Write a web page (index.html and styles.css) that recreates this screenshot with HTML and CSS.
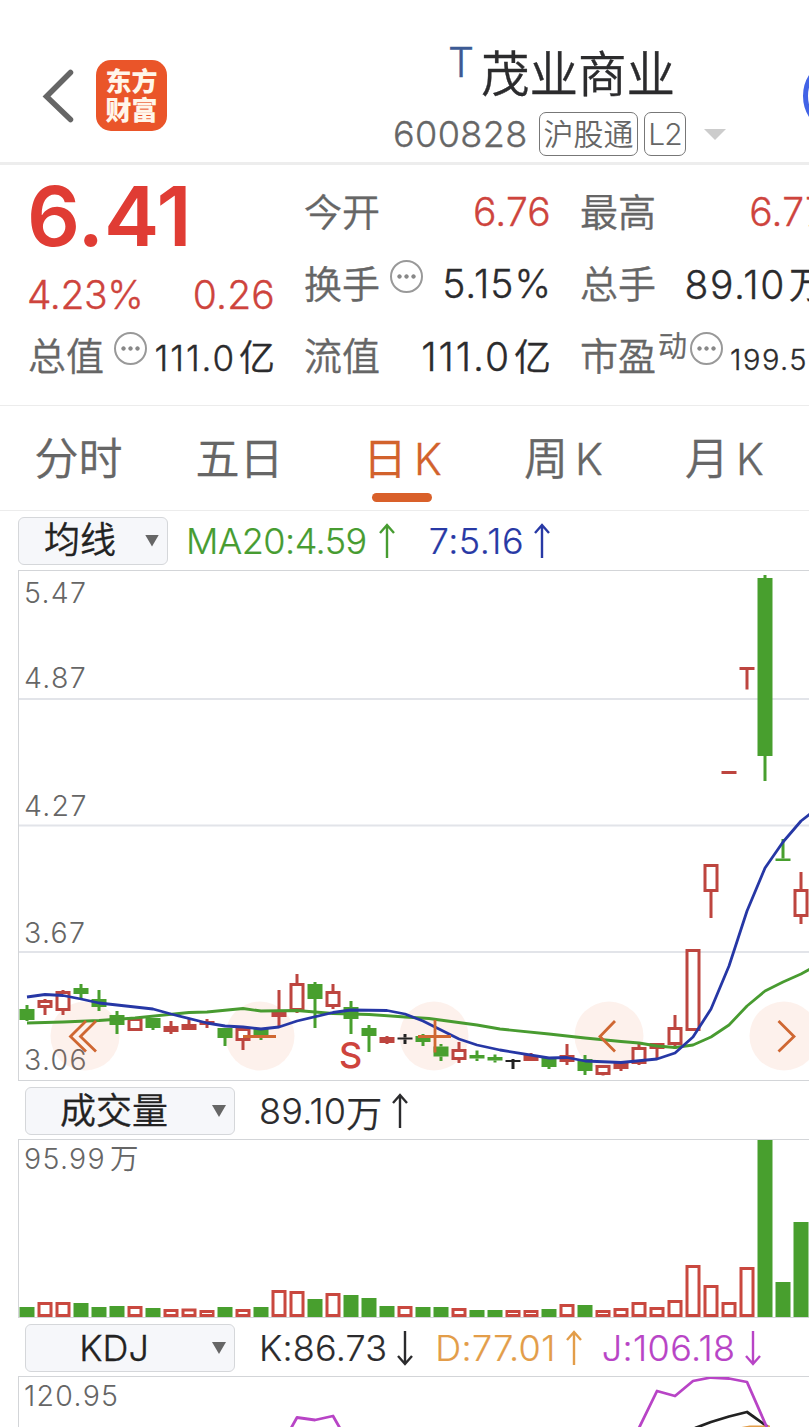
FILE: index.html
```
<!DOCTYPE html>
<html lang="zh-CN">
<head>
    <meta charset="UTF-8">
    <title>茂业商业 600828</title>
    <link rel="stylesheet" href="styles.css">
</head>
<body>
<div class="page">
    <header class="header">
        <svg class="back" viewBox="0 0 34 56"><path d="M28.5 4.5L4.5 28.5L28.5 51.5"/></svg>
        <div class="logo"><span>东方</span><span>财富</span></div>
        <div class="title">
            <div class="name"><sup>T</sup><h1>茂业商业</h1></div>
            <div class="code">
                <span class="num">600828</span>
                <span class="tag tag-hgt">沪股通</span>
                <span class="tag tag-l2">L2</span>
                <i class="caret"></i>
            </div>
        </div>
        <div class="robot"></div>
    </header>

    <section class="quote">
        <div class="col">
            <div class="price red">6.41</div>
            <div class="row change red"><span>4.23%</span><span>0.26</span></div>
            <div class="row"><label>总值</label><i class="more"></i><b class="mid wide">111.0<em>亿</em></b></div>
        </div>
        <div class="col">
            <div class="row"><label>今开</label><b class="red">6.76</b></div>
            <div class="row"><label>换手</label><i class="more"></i><b class="turn">5.15%</b></div>
            <div class="row"><label>流值</label><b class="wide">111.0<em>亿</em></b></div>
        </div>
        <div class="col">
            <div class="row"><label>最高</label><b class="red">6.77</b></div>
            <div class="row"><label>总手</label><b class="hands">89.10<em>万</em></b></div>
            <div class="row"><label>市盈<sup>动</sup></label><i class="more pe"></i><b class="small">199.5</b></div>
        </div>
    </section>

    <nav class="tabs">
        <a>分时</a>
        <a>五日</a>
        <a class="select">日<span>K</span></a>
        <a>周<span>K</span></a>
        <a>月<span>K</span></a>
    </nav>

    <div class="bar bar-ma">
        <div class="drop drop-ma"><span>均线</span><i></i></div>
        <span class="val ma20">MA20:4.59<svg class="arrow" viewBox="0 0 18 36"><path d="M9 35V2M2 10L9 2L16 10"/></svg></span>
        <span class="val ma7">7:5.16<svg class="arrow" viewBox="0 0 18 36"><path d="M9 35V2M2 10L9 2L16 10"/></svg></span>
    </div>
    <svg class="chart kline" viewBox="19 571 790 509">
        <g class="grid">
            <path d="M18 699H809M18 825.5H809M18 952H809"/>
        </g>
        <g class="axis">
            <text x="24" y="603">5.47</text>
            <text x="24" y="688">4.87</text>
            <text x="24" y="816">4.27</text>
            <text x="24" y="942.5">3.67</text>
            <text x="24" y="1069.5">3.06</text>
        </g>
        <g class="btn">
            <circle cx="85" cy="1036" r="34.5"/>
            <circle cx="260" cy="1036" r="34.5"/>
            <circle cx="434" cy="1036" r="34.5"/>
            <circle cx="609" cy="1036" r="34.5"/>
            <circle cx="784" cy="1036" r="34.5"/>
        </g>
        <g id="candles"></g>
        <polyline class="line green" points="27,1023 63,1022 99,1020.5 135,1018 189,1012.5 207,1012 243,1008.5 261,1011 297,1010.5 333,1013.5 369,1014.5 405,1017 429,1018.5 477,1025 500,1029 549,1034 585,1038 621,1041.5 639,1043 657,1046 675,1047.5 693,1045 711,1037 729,1025 747,1006 765,991 783,982 801,974 810,969"/>
        <polyline class="line blue" points="27,997 45,994.5 63,995.5 81,999 99,1003 117,1005 153,1009 171,1014 207,1023 225,1026 243,1027 261,1029 279,1027 297,1021 333,1012.5 351,1010 387,1010.5 405,1014 423,1021 459,1039 477,1045 500,1050 549,1058 567,1057.5 585,1061 621,1062.5 657,1059 675,1053 693,1037 711,1009 729,966 747,911 765,868 783,842 801,821 810,814"/>
        <text class="sell" x="339" y="1068">S</text>
        <g class="btn-icon">
            <path d="M86 1021L70.5 1036.5L86 1051.5M96 1021L80.5 1036.5L96 1051.5"/>
            <path d="M243 1036.5H276"/>
            <path d="M418 1036.5H451M435 1020V1052.5"/>
            <path d="M615 1021L600 1036.5L615 1051.5"/>
            <path d="M778.5 1021L794 1036.5L778.5 1051.5"/>
        </g>
    </svg>

    <div class="bar">
        <div class="drop"><span>成交量</span><i></i></div>
        <span class="val">89.10<em>万</em><svg class="arrow" viewBox="0 0 18 36"><path d="M9 35V2M2 10L9 2L16 10"/></svg></span>
    </div>
    <svg class="chart volume" viewBox="19 1140 790 177">
        <g class="axis"><text x="24" y="1169">95.99<tspan dx="4">万</tspan></text></g>
        <g id="volume"></g>
    </svg>

    <div class="bar">
        <div class="drop"><span>KDJ</span><i></i></div>
        <span class="val k">K:86.73<svg class="arrow" viewBox="0 0 18 36"><path d="M9 1V34M2 26L9 34L16 26"/></svg></span>
        <span class="val d">D:77.01<svg class="arrow" viewBox="0 0 18 36"><path d="M9 35V2M2 10L9 2L16 10"/></svg></span>
        <span class="val j">J:106.18<svg class="arrow" viewBox="0 0 18 36"><path d="M9 1V34M2 26L9 34L16 26"/></svg></span>
    </div>
    <svg class="chart kdj" viewBox="19 1377 790 50">
        <g class="axis"><text x="24" y="1406">120.95</text></g>
        <polyline class="line purple" points="290,1430 297,1417.5 315,1420 333,1416 341,1430"/>
        <polyline class="line black" points="695,1428 711,1422 729,1416.5 747,1412 768,1427"/>
        <polyline class="line orange" points="738,1429 750,1427 770,1427"/>
        <polyline class="line purple" points="638,1430 657,1391 675,1396 693,1381 711,1377.5 729,1378.5 747,1382 768,1430"/>
    </svg>
</div>
<script>
    // g: down, r: up (hollow), f: up (solid), k: flat   [type, high, top, bottom, low]
    var candles = [
        ["g",1005,1009,1020,1021], ["r",999,1000,1008,1015], ["r",990,991,1011,1015], ["g",984,988,994,998],
        ["g",990,999,1007,1011], ["g",1011,1015,1025,1034], ["r",1018,1018,1031,1031], ["g",1018,1018,1028,1030],
        ["f",1021,1026,1032,1034], ["f",1018,1024,1030,1030], ["f",1019,1021,1025,1028], ["g",1028,1028,1038,1046],
        ["r",1028,1028,1041,1050], ["g",1029,1029,1038,1040], ["r",990,1011,1017,1026], ["r",974,983,1011,1013],
        ["g",982,984,999,1028], ["r",984,991,1007,1009], ["g",1001,1007,1019,1034], ["g",1025,1028,1036,1052],
        ["r",1036,1037,1043,1044], ["k",1034,1037.5,1039.5,1044], ["g",1034,1036,1042,1046], ["g",1044,1046.5,1056.5,1061],
        ["r",1042,1049,1060,1063], ["g",1050.5,1055,1058.5,1061], ["g",1054.5,1057,1060.5,1062.5], ["k",1059,1060,1062,1069],
        ["f",1053,1055,1061,1061], ["g",1058,1058,1067,1069], ["r",1044,1055,1062,1065], ["g",1055,1059,1071,1075],
        ["r",1065,1065,1075,1075.5], ["r",1063,1063,1069,1071], ["r",1044,1047,1064,1065], ["r",1043,1043,1049,1059],
        ["r",1015,1027,1045,1049], ["r",949,949,1031,1031], ["r",864,864,892,918], ["f",771,771,774,774],
        ["f",667,667,670,689.5], ["g",575,578,756,781], ["g",839,858.5,861,861], ["r",872,889,917,924]
    ];
    var tops = [1307,1302,1302,1303,1307,1306,1306,1308,1309,1308.5,1310,1307,1309,1307,1290,1291,1299,1293,1295,1298,1306,1306,
        1307,1307,1308,1310,1310,1310,1310,1309,1304,1305,1310,1308,1302,1307,1300,1265,1285,1302,1267,1140,1282,1222];
    var volumeTypes = "grrgggrgrrrgrgrrgrgggrggrggrrgrgrrrrrrrrrggg";

    function box(type, x, top, bottom) {
        if (type == "r") {
            return '<rect class="hollow" x="' + (x - 6) + '" y="' + (top + 1.5) + '" width="12" height="' + (bottom - top - 3) + '"/>';
        }
        return '<rect class="fill-' + type + '" x="' + (x - 7.5) + '" y="' + top + '" width="15" height="' + (bottom - top) + '"/>';
    }
    function wick(type, x, from, to) {
        if (to <= from) return "";
        return '<rect class="fill-' + type + '" x="' + (x - 1.5) + '" y="' + from + '" width="3" height="' + (to - from) + '"/>';
    }

    var html = "";
    var bars = "";
    for (var i = 0; i < candles.length; i++) {
        var c = candles[i];
        var x = 27 + i * 18;
        html += wick(c[0], x, c[1], c[2]) + wick(c[0], x, c[3], c[4]) + box(c[0], x, c[2], c[3]);
        bars += box(volumeTypes.charAt(i), x, tops[i], 1317);
    }
    document.getElementById("candles").innerHTML = html;
    document.getElementById("volume").innerHTML = bars;
</script>
</body>
</html>
```
FILE: styles.css
```
*{
    padding: 0;
    margin: 0;
    box-sizing: border-box;
}
body{
    background: #fff;
    color: #2b2b2d;
    font-family: Inter, "Noto Sans CJK SC", sans-serif;
    font-weight: 350;
    -webkit-text-stroke: .35px;
    overflow: hidden;
}
i, em, b{
    font-style: normal;
    font-weight: inherit;
}
.page{
    width: 809px;
    height: 1427px;
    overflow: hidden;
}
.red{
    color: #e03c34;
}

/* header */
.header{
    position: relative;
    display: flex;
    height: 165px;
    border-bottom: 3px solid #ededed;
}
.back{
    width: 34px;
    height: 56px;
    margin: 68px 0 0 42px;
    fill: none;
    stroke: #666;
    stroke-width: 5.5;
    stroke-linecap: round;
}
.logo{
    display: flex;
    flex-direction: column;
    align-items: center;
    justify-content: center;
    width: 71px;
    height: 71px;
    margin: 60px 0 0 20px;
    border-radius: 15px;
    background: #ea5529;
    color: #fff6ea;
    font-size: 26px;
    font-weight: 900;
    line-height: 29px;
    -webkit-text-stroke: 0;
}
.title{
    margin: 44px 0 0 226px;
}
.name{
    display: flex;
    height: 62px;
    padding-left: 55px;
}
.name sup{
    width: 33px;
    color: #3c5a94;
    font-size: 41px;
    line-height: 36px;
}
.name h1{
    font-size: 48.5px;
    font-weight: 350;
    line-height: 62px;
}
.code{
    display: flex;
    align-items: center;
    height: 56px;
    color: #666;
}
.num{
    width: 146px;
    font-size: 36px;
    letter-spacing: .4px;
}
.tag{
    height: 44px;
    border: 1.5px solid #777;
    border-radius: 7px;
    text-align: center;
    font-size: 30px;
    line-height: 42px;
    white-space: nowrap;
    -webkit-text-stroke: 0;
}
.tag-hgt{
    width: 99px;
}
.tag-l2{
    width: 42px;
    margin-left: 6px;
    letter-spacing: -.8px;
}
.caret{
    margin-left: 18px;
    border: 11px solid transparent;
    border-top-color: #ccc;
    border-bottom: 0;
}
.robot{
    position: absolute;
    top: 57px;
    left: 803px;
    width: 78px;
    height: 78px;
    border: 5px solid #4263e6;
    border-radius: 50%;
}

/* quote */
.quote{
    display: flex;
    gap: 29px;
    height: 241px;
    padding: 11px 0 0 28px;
    border-bottom: 1px solid #ececec;
}
.col{
    flex: 0 0 247px;
}
.price{
    height: 83px;
    margin-left: -1px;
    font-size: 83px;
    font-weight: 600;
    line-height: 80px;
    -webkit-text-stroke: 0;
}
.row{
    display: flex;
    align-items: center;
    height: 72px;
    font-size: 39px;
    white-space: nowrap;
}
.row label{
    color: #666;
    font-size: 38px;
    margin-top: -5px;
}
.row label sup{
    font-size: 29px;
    line-height: 20px;
    vertical-align: 13px;
    margin-left: 2px;
}
.row b{
    margin-left: auto;
    margin-top: -2px;
    letter-spacing: .2px;
}
.row em{
    margin-left: 3px;
    font-size: 37px;
    letter-spacing: 0;
}
.row .wide{
    letter-spacing: 1.9px;
}
.row .turn{
    letter-spacing: 1px;
    margin-right: -1px;
}
.row .hands{
    letter-spacing: 1.6px;
    margin-right: 1px;
}
.row .mid{
    font-size: 35px;
}
.row .mid em{
    font-size: 36px;
}
.row .small{
    margin-left: 7px;
    padding-top: 8px;
    font-size: 29px;
    letter-spacing: 1.5px;
}
.change{
    justify-content: space-between;
    height: 61px;
    padding-top: 10px;
    letter-spacing: -.4px;
}
.change span{
    margin-left: -1px;
}
.change span:last-child{
    letter-spacing: .2px;
}
.row.red, .row .red{
    color: #ce443d;
}
.more{
    width: 33px;
    height: 33px;
    margin: -16px 0 0 10px;
    border: 2px solid #999;
    border-radius: 50%;
    background: radial-gradient(circle at 7.5px 14.5px, #888 1.8px, transparent 2.5px),
        radial-gradient(circle at 14.5px 14.5px, #888 1.8px, transparent 2.5px),
        radial-gradient(circle at 21.5px 14.5px, #888 1.8px, transparent 2.5px);
}
.more.pe{
    margin-left: 3px;
}

/* tabs */
.tabs{
    display: flex;
    height: 105px;
    border-bottom: 1px solid #ececec;
}
.tabs a{
    position: relative;
    flex: 0 0 161px;
    height: 104px;
    text-align: center;
    color: #666;
    font-size: 44px;
    line-height: 106px;
}
.tabs a:nth-child(-n+2){
    padding-right: 4px;
}
.tabs span{
    margin-left: 7px;
    font-size: 43px;
}
.tabs .select{
    color: #d2622c;
}
.tabs .select::after{
    content: "";
    position: absolute;
    left: 50px;
    bottom: 8px;
    width: 60px;
    height: 9px;
    border-radius: 5px;
    background: #d9602a;
}

/* indicator bars */
.bar{
    display: flex;
    align-items: center;
    height: 58px;
    padding: 2px 0 0 25px;
}
.bar-ma{
    height: 59px;
    padding: 0 0 0 18px;
}
.drop{
    display: flex;
    align-items: center;
    width: 210px;
    height: 48px;
    border: 1.5px solid #d5d7da;
    border-radius: 6px;
    background: #f6f7fa;
    color: #222;
    font-size: 36px;
    line-height: 45px;
}
.drop span{
    flex: 1;
    padding-right: 10px;
    text-align: center;
}
.drop i{
    width: 14px;
    height: 12px;
    margin-right: 8px;
    background: #666;
    clip-path: polygon(0 0, 100% 0, 50% 100%);
}
.drop-ma{
    width: 150px;
}
.drop-ma span{
    padding-right: 4px;
}
.val{
    display: flex;
    align-items: center;
    margin-left: 24px;
    font-size: 36px;
    letter-spacing: .2px;
    white-space: nowrap;
    -webkit-text-stroke: .2px;
}
.arrow{
    width: 18px;
    height: 36px;
    margin-left: 9px;
    fill: none;
    stroke: currentColor;
    stroke-width: 2.4;
}
.ma20{
    margin-left: 18px;
    color: #479c31;
    letter-spacing: -.5px;
}
.ma20 .arrow{
    margin-left: 11px;
}
.ma7{
    margin-left: 33px;
    color: #2839a5;
    letter-spacing: .5px;
}
.d{
    margin-left: 21px;
    color: #e39d49;
    letter-spacing: .3px;
}
.j{
    margin-left: 19px;
    color: #b844c6;
    letter-spacing: .4px;
}

/* charts */
.chart{
    display: block;
    width: 791px;
    margin-left: 18px;
    border: solid #d3d5d8;
    border-width: 1px 0 1px 1px;
}
.kline{
    height: 511px;
}
.volume{
    height: 179px;
}
.kdj{
    height: 51px;
    border-bottom: 0;
}
.grid{
    fill: none;
    stroke: #e2e4e9;
    stroke-width: 2;
}
.axis{
    fill: #666;
    font-size: 28.5px;
    letter-spacing: 1.3px;
}
.btn{
    fill: rgba(240, 130, 80, .11);
}
.btn-icon{
    fill: none;
    stroke: #cf6732;
    stroke-width: 2.8;
}
.sell{
    fill: #ce443d;
    font-size: 36px;
    font-weight: 500;
}
.line{
    fill: none;
    stroke-width: 2.8;
    stroke-linejoin: round;
}
.green{ stroke: #489b30; }
.blue{ stroke: #2637a5; }
.purple{ stroke: #b844c6; }
.black{ stroke: #222; }
.orange{ stroke: #e39d49; }
.hollow{
    fill: #fff;
    stroke: #bd453f;
    stroke-width: 3;
}
#volume .hollow{
    stroke: #c9483f;
}
.fill-g{ fill: #489f2e; }
.fill-f, .fill-r{ fill: #bd453f; }
.fill-k{ fill: #222; }
```
